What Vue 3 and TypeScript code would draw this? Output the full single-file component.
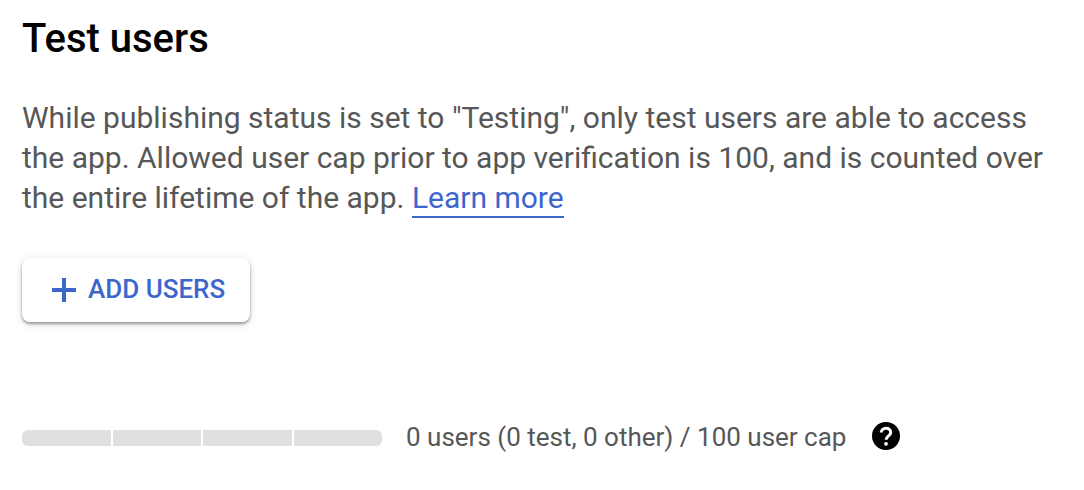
<script setup lang="ts">
import { computed, ref } from 'vue'

const testUsers = ref(0)
const otherUsers = ref(0)
const userCap = 100
const segments = 4

const total = computed(() => testUsers.value + otherUsers.value)

function fill(segment: number): string {
  const share = (total.value / userCap) * segments - (segment - 1)
  return `${Math.min(Math.max(share, 0), 1) * 100}%`
}
</script>

<template>
  <section class="panel">
    <h2 class="title">Test users</h2>
    <p class="description">
      While publishing status is set to "Testing", only test users are able to access the app.
      Allowed user cap prior to app verification is 100, and is counted over the entire lifetime of
      the app. <a class="link" href="#">Learn more</a>
    </p>
    <button class="add" type="button">
      <svg class="plus" viewBox="0 0 24 24" aria-hidden="true">
        <path d="M10 0h4v10h10v4H14v10h-4V14H0v-4h10z" />
      </svg>
      <span class="add-label">ADD USERS</span>
    </button>
    <div class="usage">
      <div class="meter" role="meter" aria-label="User cap" aria-valuemin="0" :aria-valuemax="userCap" :aria-valuenow="total">
        <span v-for="segment in segments" :key="segment" class="segment">
          <span class="fill" :style="{ width: fill(segment) }"></span>
        </span>
      </div>
      <span class="count">{{ total }} users ({{ testUsers }} test, {{ otherUsers }} other) / {{ userCap }} user cap</span>
      <button class="help" type="button" aria-label="Help">
        <svg viewBox="0 0 28 28" aria-hidden="true">
          <circle cx="14" cy="14" r="14" />
          <path class="mark" d="M9.3 10.6C9.3 7.9 11.3 6.3 14 6.3s4.7 1.6 4.7 4.1c0 3.4-4.6 3.6-4.6 7.4" />
          <circle class="dot" cx="14" cy="21.8" r="1.9" />
        </svg>
      </button>
    </div>
  </section>
</template>

<style>
body {
  background: #fff;
}
</style>

<style scoped>
.panel {
  padding: 15px 22px 32px;
  font-family: Roboto, sans-serif;
  color: #575757;
}
.title {
  margin: 0 0 35px;
  font-size: 40px;
  line-height: 48px;
  font-weight: 500;
  color: #000;
}
.description {
  margin: 0 0 40px;
  font-size: 30px;
  line-height: 40px;
}
.link {
  padding-bottom: 1px;
  color: #3c66cc;
  text-decoration: none;
  border-bottom: 2px solid #3c66cc;
}
.add {
  display: flex;
  align-items: center;
  gap: 12px;
  height: 64px;
  padding: 0 25px 0 30px;
  border: 0;
  border-radius: 8px;
  background: #fff;
  box-shadow: 0 2px 3px rgba(0, 0, 0, 0.36), 0 2px 10px rgba(0, 0, 0, 0.12);
  color: #3c66cc;
  font: 500 26px/32px Roboto, sans-serif;
  cursor: pointer;
}
.add-label {
  padding-bottom: 2px;
}
.plus {
  width: 24px;
  height: 24px;
  fill: currentColor;
}
.usage {
  display: flex;
  align-items: center;
  margin-top: 95px;
}
.meter {
  display: flex;
  gap: 2px;
  width: 360px;
  height: 16px;
  margin-top: 4px;
  overflow: hidden;
  border-radius: 6px;
}
.segment {
  flex: 1;
  background: #e0e0e0;
}
.fill {
  display: block;
  height: 100%;
  background: #3c66cc;
}
.count {
  margin-left: 24px;
  padding-top: 2px;
  font-size: 26px;
  line-height: 36px;
}
.help {
  margin-left: 26px;
  padding: 0;
  border: 0;
  background: none;
  color: #000;
  cursor: pointer;
}
.help svg {
  display: block;
  width: 28px;
  height: 28px;
  fill: currentColor;
}
.help .mark {
  fill: none;
  stroke: #fff;
  stroke-width: 3;
}
.help .dot {
  fill: #fff;
}
</style>
